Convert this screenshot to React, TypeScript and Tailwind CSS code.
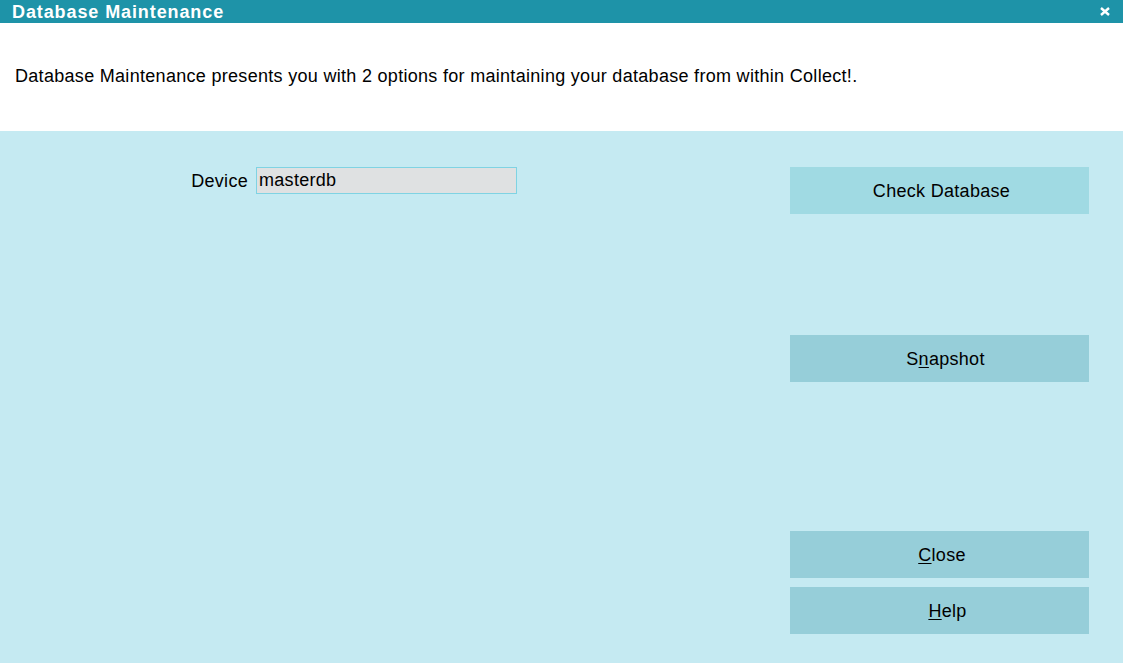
import React from 'react';

const font = { fontFamily: '"Liberation Sans", Arial, sans-serif' };

const Btn: React.FC<{ children: React.ReactNode; className?: string }> = ({ children, className = '' }) => (
    <div className={`h-[47px] w-[299px] flex items-center justify-center pt-[2px] text-[18px] tracking-[0.3px] text-black ${className}`}>
        {children}
    </div>
);

const App: React.FC = () => (
    <div className="w-[1123px] h-[663px] flex flex-col bg-[#c5eaf2] overflow-hidden" style={font}>
        {/* Title bar */}
        <div className="h-[23px] bg-[#1e93a8] flex items-center justify-between pl-[12px] pr-[13px]">
            <span className="text-white font-bold text-[18px] tracking-[0.9px] leading-none">Database Maintenance</span>
            <svg width="10" height="9" viewBox="0 0 10 9">
                <path d="M1 1 L9 8 M9 1 L1 8" stroke="white" strokeWidth="2.4" />
            </svg>
        </div>

        {/* Description */}
        <div className="h-[108px] bg-white flex items-center pl-[15px] pb-[1px]">
            <p className="text-[18px] tracking-[0.3px] text-black">
                Database Maintenance presents you with 2 options for maintaining your database from within Collect!.
            </p>
        </div>

        {/* Body */}
        <div className="flex-1 flex">
            <div className="flex-1 pt-[35px]">
                <div className="flex items-center text-[18px] tracking-[0.3px] text-black">
                    <span className="w-[248px] text-right pt-[2px]">Device</span>
                    <div className="ml-[8px] w-[261px] h-[27px] bg-[#dfe1e2] border border-[#7fd3e3] flex items-center pl-[2px]">
                        masterdb
                    </div>
                </div>
            </div>
            <div className="w-[333px] pt-[36px] flex flex-col">
                <Btn className="bg-[#a0dae3]">
                    <span className="pl-[4px]">Check Database</span>
                </Btn>
                <Btn className="bg-[#96ced9] mt-[121px]">
                    <span className="pl-[12px]">S<span className="underline underline-offset-2">n</span>apshot</span>
                </Btn>
                <Btn className="bg-[#96ced9] mt-[149px]">
                    <span className="pl-[5px]"><span className="underline underline-offset-2">C</span>lose</span>
                </Btn>
                <Btn className="bg-[#96ced9] mt-[9px]">
                    <span className="pl-[16px]"><span className="underline underline-offset-2">H</span>elp</span>
                </Btn>
            </div>
        </div>
    </div>
);

export default App;
